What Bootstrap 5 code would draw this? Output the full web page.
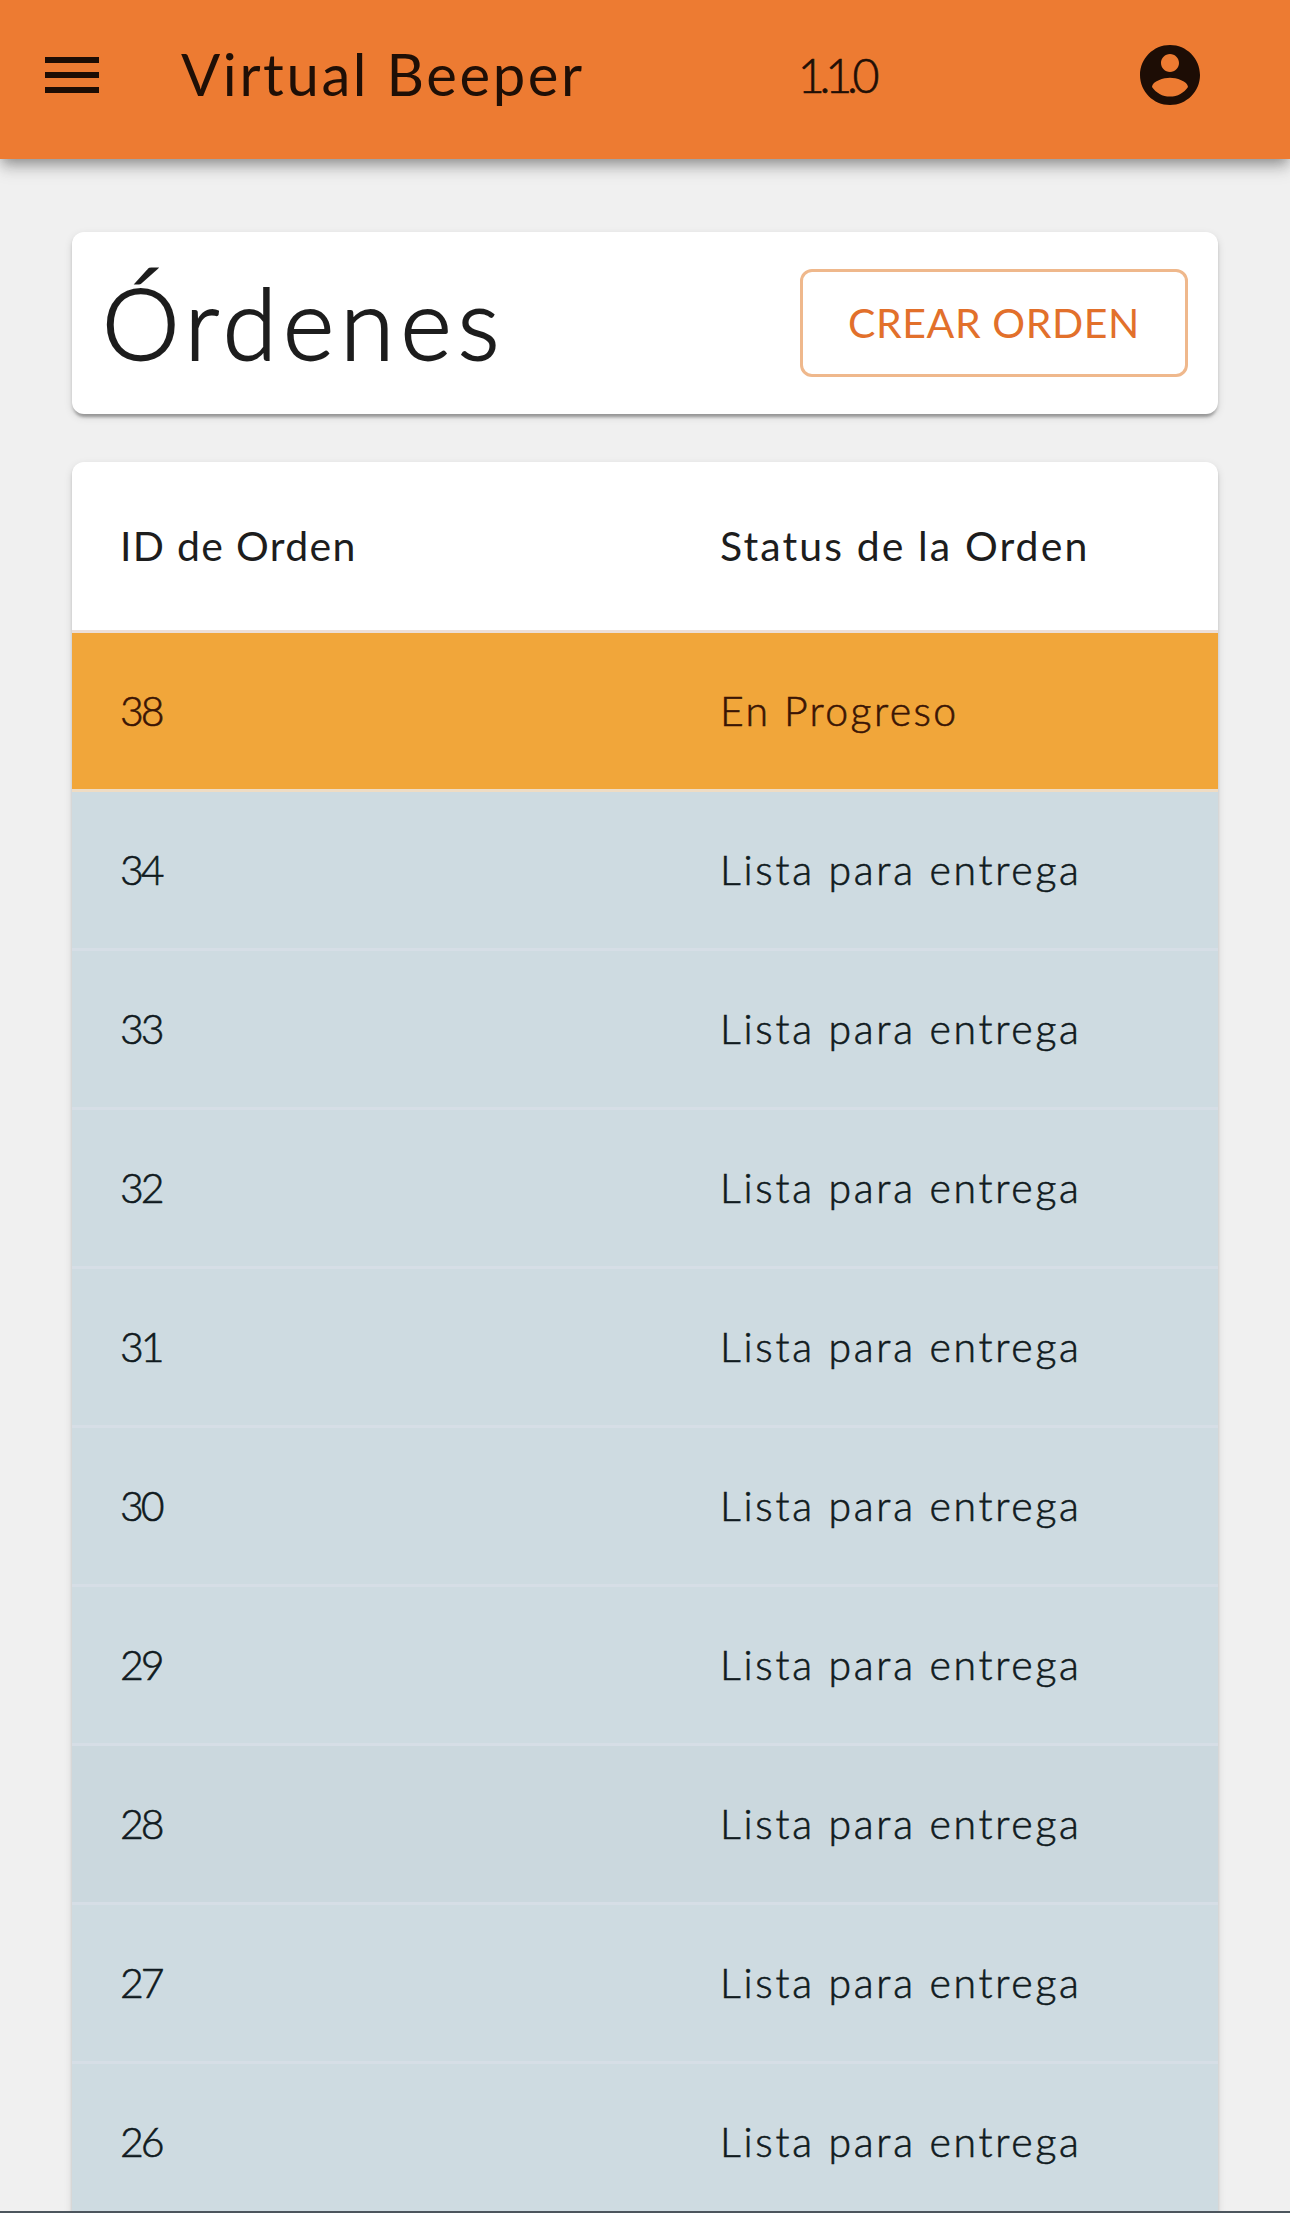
<!DOCTYPE html>
<html lang="es">
<head>
<meta charset="utf-8">
<meta name="viewport" content="width=device-width, initial-scale=1">
<title>Virtual Beeper</title>
<link href="https://cdn.jsdelivr.net/npm/bootstrap@5.3.0/dist/css/bootstrap.min.css" rel="stylesheet">
<style>
html, body { height: 2213px; overflow: hidden; }
body { background: #f0f0f0; color: #1d1d1d; font-family: Lato, "Open Sans", sans-serif; font-weight: 300; font-size: 41px; line-height: 1.5; }
.topbar { height: 159px; padding: 0 84px 0 36px; background: #ed7b32; color: #1f0f06; box-shadow: 0 6px 12px -3px rgba(0,0,0,.3), 0 12px 15px rgba(0,0,0,.1), 0 3px 18px rgba(0,0,0,.1); }
.topbar svg { width: 72px; height: 72px; display: block; fill: #1d0d05; }
.topbar-row { height: 150px; }
.brand { font-size: 58px; letter-spacing: 2.6px; font-weight: 400; margin-left: 73px; padding-bottom: 3px; }
.version { font-size: 46.5px; letter-spacing: -5.2px; padding-top: 2px; margin-left: 213px; margin-right: auto; -webkit-text-stroke: .7px currentColor; }
.page { padding: 73px 72px 0; }
.panel { background: #fff; border-radius: 12px; box-shadow: 0 6px 3px -3px rgba(0,0,0,.2), 0 3px 3px rgba(0,0,0,.14), 0 3px 9px rgba(0,0,0,.12); }
.title-panel { height: 182px; padding: 0 30px; margin-bottom: 48px; }
.page-title { font-size: 98px; font-weight: 300; line-height: 1; letter-spacing: 6.2px; padding-bottom: 3px; -webkit-text-stroke: 1.8px currentColor; }
.btn-create { height: 108px; width: 388px; border: 3px solid #efb88c; border-radius: 12px; color: #e2702b; font-size: 41px; font-weight: 400; letter-spacing: .6px; padding: 0; }
.orders { --bs-table-bg: transparent; color: #1d1d1d; table-layout: fixed; border-collapse: separate; border-spacing: 0; }
.orders th, .orders td { height: 159px; padding: 0 0 0 48px; border-bottom: 3px solid #d6dee6; vertical-align: middle; font-weight: 300; }
.orders td { -webkit-text-stroke: .6px currentColor; }
.orders td:first-child { letter-spacing: -3px; }
.orders td:last-child { letter-spacing: 2.7px; }
.orders thead th { height: 171px; font-weight: 400; border-color: #ecdfd8; letter-spacing: 1.3px; }
.orders thead th:last-child { letter-spacing: 2.1px; }
.orders .in-progress td { background: #f1a63a; border-color: #efdcc4; color: #3a1505; }
.orders .in-progress td:last-child { letter-spacing: 2.4px; }
.orders .ready td { background: #cedbe1; color: #101a20; }
.orders .pressed td { background: #cbd8de; }
.col-id { width: 600px; }
.screen-edge { height: 2px; background: #4c555d; }
</style>
</head>
<body>
<header class="topbar">
  <div class="topbar-row d-flex align-items-center">
    <svg viewBox="0 0 24 24" aria-hidden="true"><path d="M3 18h18v-2H3v2zm0-5h18v-2H3v2zm0-7v2h18V6H3z"/></svg>
    <span class="brand">Virtual Beeper</span>
    <span class="version">1.1.0</span>
    <svg viewBox="0 0 24 24" aria-hidden="true"><path d="M12 2C6.480 2 2 6.480 2 12s4.480 10 10 10 10-4.480 10-10S17.520 2 12 2zm0 3c1.660 0 3 1.340 3 3s-1.340 3-3 3-3-1.340-3-3 1.340-3 3-3zm0 14.200c-2.500 0-4.710-1.280-6-3.220.030-1.990 4-3.080 6-3.080 1.990 0 5.970 1.090 6 3.080-1.290 1.940-3.500 3.220-6 3.220z"/></svg>
  </div>
</header>
<main class="page">
  <div class="panel title-panel d-flex align-items-center justify-content-between">
    <h1 class="page-title mb-0">Órdenes</h1>
    <button type="button" class="btn btn-create">CREAR ORDEN</button>
  </div>
  <div class="panel">
    <table class="table orders mb-0">
      <colgroup><col class="col-id"><col></colgroup>
      <thead><tr><th>ID de Orden</th><th>Status de la Orden</th></tr></thead>
      <tbody>
        <tr class="in-progress"><td>38</td><td>En Progreso</td></tr>
        <tr class="ready"><td>34</td><td>Lista para entrega</td></tr>
        <tr class="ready"><td>33</td><td>Lista para entrega</td></tr>
        <tr class="ready"><td>32</td><td>Lista para entrega</td></tr>
        <tr class="ready"><td>31</td><td>Lista para entrega</td></tr>
        <tr class="ready"><td>30</td><td>Lista para entrega</td></tr>
        <tr class="ready"><td>29</td><td>Lista para entrega</td></tr>
        <tr class="ready pressed"><td>28</td><td>Lista para entrega</td></tr>
        <tr class="ready"><td>27</td><td>Lista para entrega</td></tr>
        <tr class="ready"><td>26</td><td>Lista para entrega</td></tr>
      </tbody>
    </table>
  </div>
</main>
<div class="screen-edge fixed-bottom"></div>
<script src="https://cdn.jsdelivr.net/npm/bootstrap@5.3.0/dist/js/bootstrap.bundle.min.js"></script>
</body>
</html>
